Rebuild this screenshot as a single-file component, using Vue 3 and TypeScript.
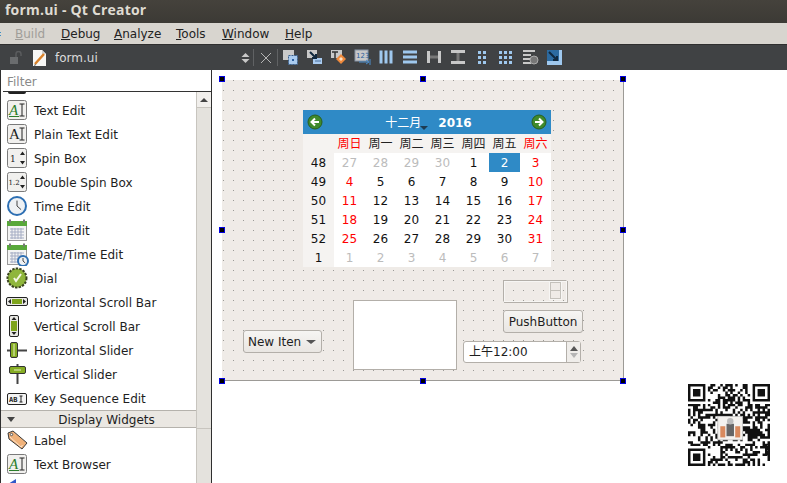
<script setup lang="ts">
import { computed } from 'vue'

const menus = [
  { label: 'Build', key: 'B', rest: 'uild', disabled: true, width: 46 },
  { label: 'Debug', key: 'D', rest: 'ebug', disabled: false, width: 53 },
  { label: 'Analyze', key: 'A', rest: 'nalyze', disabled: false, width: 62 },
  { label: 'Tools', key: 'T', rest: 'ools', disabled: false, width: 46 },
  { label: 'Window', key: 'W', rest: 'indow', disabled: false, width: 63 },
  { label: 'Help', key: 'H', rest: 'elp', disabled: false, width: 40 }
]

const frame =
  '<rect x="2.5" y="2.5" width="19" height="19" rx="2" fill="#f1f0ee" stroke="#7a7a7a"/>'
const ai = (color: string) =>
  frame +
  `<text x="4" y="17" font-family="Liberation Serif" font-size="15" fill="${color}"${color === '#222' ? '' : ' font-style="italic"'}>A</text>` +
  (color === '#222' ? '' : '<path d="M4 18.5h10" stroke="#2a7d2a"/>') +
  '<path d="M14.5 6h5M17 6v12M14.5 18h5" stroke="#222" fill="none"/>'
const clock = (cx: number, cy: number, r: number) =>
  `<circle cx="${cx}" cy="${cy}" r="${r}" fill="#eef1f4" stroke="#2d6fb3" stroke-width="2"/>` +
  `<path d="M${cx} ${cy - r * 0.6}V${cy}L${cx + r * 0.45} ${cy + r * 0.4}" stroke="#444" fill="none"/>`
const calendar =
  '<rect x="2.5" y="3.5" width="19" height="19" fill="#f4f4f4" stroke="#999"/>' +
  '<rect x="2" y="3" width="20" height="5" fill="#58a83a"/>' +
  '<path d="M5 1.5v3M19 1.5v3" stroke="#777" stroke-width="2"/>' +
  '<path d="M5 11h14M5 14h14M5 17h14M5 20h14M7 10v11M10 10v11M13 10v11M16 10v11" stroke="#a5adc4"/>'

const items = [
  { name: 'Text Edit', icon: ai('#2a7d2a') },
  { name: 'Plain Text Edit', icon: ai('#222') },
  {
    name: 'Spin Box',
    icon:
      frame +
      '<text x="5" y="16" font-family="DejaVu Serif" font-size="9" fill="#222">1</text>' +
      '<path d="M15 9l2.5-3.5L20 9zM15 15l2.5 3.5L20 15z" fill="#222"/>'
  },
  {
    name: 'Double Spin Box',
    icon:
      frame +
      '<text x="3.5" y="15" font-family="DejaVu Serif" font-size="7" fill="#222">1.2</text>' +
      '<path d="M15 9l2.5-3.5L20 9zM15 15l2.5 3.5L20 15z" fill="#222"/>'
  },
  { name: 'Time Edit', icon: clock(12, 12, 9) },
  { name: 'Date Edit', icon: calendar },
  {
    name: 'Date/Time Edit',
    icon: calendar + clock(18, 19, 5)
  },
  {
    name: 'Dial',
    icon:
      '<circle cx="12" cy="12" r="9.5" fill="#8fb63c" stroke="#39421f" stroke-width="2" stroke-dasharray="2.4 1.2"/>' +
      '<circle cx="12" cy="12" r="7.5" fill="#8fb63c"/>' +
      '<path d="M9 12l2 3 5-7" stroke="#f4f7e6" stroke-width="2" fill="none"/>'
  },
  {
    name: 'Horizontal Scroll Bar',
    icon:
      '<rect x="1.5" y="7.5" width="21" height="8" rx="1.5" fill="#e8e8e4" stroke="#222"/>' +
      '<rect x="7" y="9" width="10" height="5" fill="#7ea41c"/>' +
      '<path d="M6 9l-3 2.5 3 2.5zM18 9l3 2.5-3 2.5z" fill="#222"/>'
  },
  {
    name: 'Vertical Scroll Bar',
    icon:
      '<rect x="4.5" y="1.5" width="9" height="21" rx="1.5" fill="#e8e8e4" stroke="#222"/>' +
      '<rect x="6" y="7" width="6" height="10" fill="#7ea41c"/>' +
      '<path d="M6.5 6L9 3l2.5 3zM6.5 18L9 21l2.5-3z" fill="#222"/>'
  },
  {
    name: 'Horizontal Slider',
    icon:
      '<path d="M2 12.5h20" stroke="#444" stroke-width="2"/>' +
      '<rect x="5.5" y="4.5" width="7" height="15" rx="1.5" fill="#86ad24" stroke="#333"/>' +
      '<path d="M9 6v12" stroke="#e6efc6"/>'
  },
  {
    name: 'Vertical Slider',
    icon:
      '<path d="M12.5 2v20" stroke="#444" stroke-width="2"/>' +
      '<rect x="4.5" y="4.5" width="16" height="7" rx="1.5" fill="#86ad24" stroke="#333"/>' +
      '<path d="M9 8h7" stroke="#e6efc6"/>'
  },
  {
    name: 'Key Sequence Edit',
    icon:
      '<rect x="2.5" y="7.5" width="19" height="11" rx="1.5" fill="#f4f4f4" stroke="#222"/>' +
      '<text x="4" y="15.5" font-family="DejaVu Sans Mono" font-weight="bold" font-size="7" fill="#222">AB</text>' +
      '<path d="M14.5 10h3M16 10v6M14.5 16h3" stroke="#222" fill="none"/>'
  }
]

const displayItems = [
  {
    name: 'Label',
    icon:
      '<path d="M3 5l5-2 14 12-5 6L4 11z" fill="#f0b27a" stroke="#3a3a3a"/>' +
      '<path d="M5 9l11 10 1.5-2" stroke="#fbe3cc" fill="none"/>' +
      '<circle cx="6.5" cy="6.5" r="1.2" fill="#fff" stroke="#555"/>'
  },
  { name: 'Text Browser', icon: ai('#2a7d2a') },
  {
    name: '',
    icon: '<path d="M3 8l8-5v6H3z" fill="#3158c9"/>'
  }
]

const toolIcons = [
  '<rect x="1" y="1" width="11" height="10" fill="#c9c9c9"/><rect x="6.5" y="6.5" width="9" height="9" fill="#a9cbf0" stroke="#3a5f8c" stroke-dasharray="2 1"/><rect x="10" y="10" width="2" height="2" fill="#2c5f9e"/>',
  '<rect x="1" y="1" width="10" height="8" fill="#c9c9c9"/><rect x="7" y="9" width="9" height="6" fill="#a9cbf0"/><path d="M4 3l6 6M10 5v4H6" stroke="#10283f" stroke-width="2" fill="none"/><path d="M9 12h6" stroke="#4a6f9a"/>',
  '<rect x="1" y="1" width="11" height="8" fill="#c9c9c9"/><path d="M2 3h6M5 3v6" stroke="#333" stroke-width="1.5"/><path d="M6 10l5-5 5 5-5 5z" fill="#f08a3c"/><path d="M9 10l2-2 2 2-2 2z" fill="#fde2c6"/>',
  '<rect x="1" y="1" width="13" height="11" fill="#c9c9c9" stroke="#8795a8"/><text x="2" y="9" font-family="DejaVu Sans" font-size="7" fill="#2c5f9e">123</text><path d="M5 13h9M12 11l3 2-3 2M16 10v6" stroke="#4d8ecb" fill="none"/>',
  '<path d="M3 1.5v13M8 1.5v13M13 1.5v13" stroke="#9fc8ee" stroke-width="3"/>',
  '<path d="M1 3h14M1 8h14M1 13h14" stroke="#9fc8ee" stroke-width="3"/>',
  '<path d="M2.5 2v12M13.5 2v12" stroke="#c8c8c8" stroke-width="3"/><path d="M4 8h8" stroke="#777" stroke-width="3"/>',
  '<path d="M1 2.5h14M1 13.5h14" stroke="#c8c8c8" stroke-width="3"/><path d="M8 4v8" stroke="#777" stroke-width="3"/>',
  '<path d="M4 2h3v3H4zM9 2h3v3H9zM4 7h3v3H4zM9 7h3v3H9zM4 12h3v3H4zM9 12h3v3H9z" fill="#9fc8ee"/>',
  '<path d="M1 2h3v3H1zM6 2h3v3H6zM11 2h3v3h-3zM1 7h3v3H1zM6 7h3v3H6zM11 7h3v3h-3zM1 12h3v3H1zM6 12h3v3H6zM11 12h3v3h-3z" fill="#9fc8ee"/>',
  '<path d="M1 2h12M1 6h8M1 10h8M1 14h8" stroke="#c8c8c8" stroke-width="2"/><circle cx="12" cy="11" r="4" fill="#777" stroke="#aaa"/>',
  '<rect x="1" y="1" width="15" height="15" fill="#9fc8ee"/><rect x="1" y="1" width="12" height="11" fill="#2c6aa0"/><path d="M3 3l8 8M11 7v4H7" stroke="#10283f" stroke-width="2" fill="none"/>'
]

const weekdays = [
  { text: '周日', red: true },
  { text: '周一', red: false },
  { text: '周二', red: false },
  { text: '周三', red: false },
  { text: '周四', red: false },
  { text: '周五', red: false },
  { text: '周六', red: true }
]

const weeks = [
  { no: 48, days: [27, 28, 29, 30, 1, 2, 3] },
  { no: 49, days: [4, 5, 6, 7, 8, 9, 10] },
  { no: 50, days: [11, 12, 13, 14, 15, 16, 17] },
  { no: 51, days: [18, 19, 20, 21, 22, 23, 24] },
  { no: 52, days: [25, 26, 27, 28, 29, 30, 31] },
  { no: 1, days: [1, 2, 3, 4, 5, 6, 7] }
]

const dayClass = (row: number, col: number, day: number) => ({
  muted: (row === 0 && day > 20) || row === 5,
  red: (col === 0 || col === 6) && !(row === 5),
  selected: row === 0 && day === 2
})

// QR pattern is only decorative, seeded so that it stays the same between runs
const qrPath = computed(() => {
  const size = 33
  let seed = 20161202
  const next = () => {
    seed = (seed * 1103515245 + 12345) & 0x7fffffff
    return (seed >> 16) & 1
  }
  const inFinder = (x: number, y: number, ox: number, oy: number) =>
    x >= ox && x < ox + 8 && y >= oy && y < oy + 8
  let d = ''
  for (let y = 0; y < size; y++) {
    for (let x = 0; x < size; x++) {
      if (
        inFinder(x, y, 0, 0) ||
        inFinder(x, y, 25, 0) ||
        inFinder(x, y, 0, 25)
      )
        continue
      if (next()) d += `M${x} ${y}h1v1h-1z`
    }
  }
  for (const [ox, oy] of [
    [0, 0],
    [26, 0],
    [0, 26]
  ]) {
    d += `M${ox} ${oy}h7v7h-7zM${ox + 1} ${oy + 1}v5h5v-5zM${ox + 2} ${oy + 2}h3v3h-3z`
  }
  return d
})

const handles = [
  { x: 0, y: 0 },
  { x: 201, y: 0 },
  { x: 401, y: 0 },
  { x: 0, y: 151 },
  { x: 401, y: 151 },
  { x: 0, y: 302 },
  { x: 201, y: 302 },
  { x: 401, y: 302 }
]
</script>

<template>
  <div class="app">
    <header class="titlebar">form.ui - Qt Creator</header>

    <nav class="menubar">
      <span
        v-for="menu in menus"
        :key="menu.label"
        class="menu"
        :class="{ disabled: menu.disabled }"
        :style="{ width: menu.width + 'px' }"
        ><u>{{ menu.key }}</u>{{ menu.rest }}</span
      >
    </nav>

    <div class="toolbar">
      <svg class="lock" width="14" height="14" viewBox="0 0 14 14">
        <rect x="1" y="6" width="8" height="7" fill="#6a6c6e" />
        <path d="M7 6V3a2.5 2.5 0 0 1 5 0v2" stroke="#5a5c5e" stroke-width="1.5" fill="none" />
      </svg>
      <svg class="doc" width="16" height="18" viewBox="0 0 16 18">
        <path d="M1 1h9l4 4v12H1z" fill="#f7f7f5" />
        <path d="M10 1v4h4" fill="#cfcfcf" />
        <path d="M3 15L12 5" stroke="#d9822b" stroke-width="2.5" />
        <path d="M3 15l-1 2 2-1z" fill="#333" />
      </svg>
      <span class="file">form.ui</span>
      <svg class="updown" width="9" height="12" viewBox="0 0 9 12">
        <path d="M0.5 5L4.5 1l4 4zM0.5 7l4 4 4-4z" fill="#c8c8c8" />
      </svg>
      <i class="sep"></i>
      <svg class="close" width="12" height="12" viewBox="0 0 12 12">
        <path d="M1 1l10 10M11 1L1 11" stroke="#b5b5b5" stroke-width="1" />
      </svg>
      <i class="sep"></i>
      <div class="tools">
        <svg
          v-for="(icon, i) in toolIcons"
          :key="i"
          width="17"
          height="17"
          viewBox="0 0 17 17"
          v-html="icon"
        ></svg>
      </div>
    </div>

    <div class="workspace">
      <aside class="sidebar">
        <div class="filter">Filter</div>
        <div class="box">
          <div class="list">
            <div class="sliver"></div>
            <div v-for="item in items" :key="item.name" class="row">
              <svg width="24" height="24" viewBox="0 0 24 24" v-html="item.icon"></svg>
              <span>{{ item.name }}</span>
            </div>
            <div class="category">
              <i class="tri"></i>
              <span>Display Widgets</span>
            </div>
            <div v-for="item in displayItems" :key="item.name" class="row">
              <svg width="24" height="24" viewBox="0 0 24 24" v-html="item.icon"></svg>
              <span>{{ item.name }}</span>
            </div>
          </div>
          <div class="scrollbar">
            <div class="scroll-up"><i></i></div>
            <div class="scroll-line"></div>
          </div>
        </div>
      </aside>

      <main class="canvas">
        <div class="form">
          <div class="calendar">
            <div class="cal-nav">
              <svg width="16" height="16" viewBox="0 0 16 16">
                <circle cx="8" cy="8" r="7" fill="#3f8a2c" stroke="#2a5f1e" />
                <path d="M12 8H5M8 4.5L4.5 8 8 11.5" stroke="#fff" stroke-width="2" fill="none" />
              </svg>
              <div class="cal-title">
                <span class="month">十二月<i class="month-arrow"></i></span>
                <span class="year">2016</span>
              </div>
              <svg width="16" height="16" viewBox="0 0 16 16">
                <circle cx="8" cy="8" r="7" fill="#3f8a2c" stroke="#2a5f1e" />
                <path d="M4 8h7M8 4.5L11.5 8 8 11.5" stroke="#fff" stroke-width="2" fill="none" />
              </svg>
            </div>
            <div class="cal-grid">
              <span class="cal-head"></span>
              <span
                v-for="day in weekdays"
                :key="day.text"
                class="cal-head"
                :class="{ red: day.red }"
                >{{ day.text }}</span
              >
              <template v-for="(week, row) in weeks" :key="week.no">
                <span class="cal-week">{{ week.no }}</span>
                <span
                  v-for="(day, col) in week.days"
                  :key="col"
                  class="cal-day"
                  :class="dayClass(row, col, day)"
                  >{{ day }}</span
                >
              </template>
            </div>
          </div>

          <div class="combo">
            <span>New Iten</span>
            <i class="combo-arrow"></i>
          </div>
          <div class="blank"></div>
          <div class="scroller"><i></i></div>
          <button class="push">PushButton</button>
          <div class="time">
            <span class="time-text">上午12:00</span>
            <div class="spin">
              <i class="spin-up"></i>
              <i class="spin-down"></i>
            </div>
          </div>

          <i
            v-for="(h, i) in handles"
            :key="i"
            class="handle"
            :style="{ left: h.x + 'px', top: h.y + 'px' }"
          ></i>
        </div>

        <div class="qr">
          <svg width="82" height="82" viewBox="0 0 33 33">
            <path :d="qrPath" fill="#111" fill-rule="evenodd" />
            <rect x="12" y="13" width="10" height="9.5" fill="#f4f2ef" stroke="#bbb" stroke-width="0.3" />
            <rect x="13" y="17" width="2" height="4.5" fill="#d98a5e" />
            <rect x="19" y="17" width="2" height="4.5" fill="#d98a5e" />
            <rect x="15.5" y="16" width="3" height="5" fill="#666" />
            <circle cx="17" cy="15" r="1.3" fill="#bbb" />
          </svg>
        </div>
      </main>
    </div>
  </div>
</template>

<style>
html,
body {
  margin: 0;
  background: #fff;
}
</style>

<style scoped>
.app {
  width: 787px;
  height: 483px;
  overflow: hidden;
  display: flex;
  flex-direction: column;
  font-family: 'DejaVu Sans', 'Noto Sans CJK SC', sans-serif;
  font-size: 12px;
  color: #1e1e1e;
  background: #fff;
}

.titlebar {
  height: 23px;
  padding-left: 5px;
  line-height: 20px;
  font-family: 'Open Sans', sans-serif;
  font-weight: 700;
  font-size: 14px;
  letter-spacing: 0.2px;
  color: #dfdbd2;
  background: linear-gradient(#45423c, #3c3a35);
}

.menubar {
  height: 21px;
  position: relative;
  display: flex;
  padding-left: 15px;
  line-height: 23px;
  background: #d8d5cf;
  border-bottom: 1px solid #2f2f2f;
  color: #222;
}

.menubar::before {
  content: '';
  position: absolute;
  left: 0;
  top: 9px;
  width: 1px;
  height: 1px;
  background: #3f8fc4;
  box-shadow: 0 3px 0 #3f8fc4;
}

.menu.disabled {
  color: #a09e99;
}

.toolbar {
  height: 25px;
  display: flex;
  align-items: center;
  background: #404244;
  color: #dcdcdc;
}

.lock {
  margin-left: 9px;
}

.doc {
  margin-left: 9px;
}

.file {
  margin-left: 7px;
  width: 186px;
}

.updown {
  flex: none;
  margin-right: 3px;
}

.sep {
  width: 1px;
  height: 17px;
  background: #606264;
}

.close {
  margin: 0 5px 0 6px;
}

.tools {
  display: flex;
  gap: 7px;
  margin-left: 4px;
}

.workspace {
  flex: 1;
  display: flex;
  min-height: 0;
}

.sidebar {
  width: 210px;
  flex: none;
  display: flex;
  flex-direction: column;
  border-left: 1px solid #2f2f2f;
  border-right: 1px solid #2f2f2f;
  background: #fff;
}

.filter {
  height: 21px;
  flex: none;
  margin-left: 2px;
  padding-left: 4px;
  line-height: 24px;
  color: #8a8a8a;
  background: #fff;
  border-bottom: 1px solid #333;
}

.box {
  flex: 1;
  display: flex;
  min-height: 0;
}

.list {
  flex: 1;
  overflow: hidden;
}

.sliver {
  height: 6px;
  position: relative;
}

.sliver::before {
  content: '';
  position: absolute;
  left: 7px;
  top: 0;
  width: 18px;
  height: 2px;
  background: #222;
  border-radius: 0 0 4px 4px;
}

.row {
  height: 24px;
  display: flex;
  align-items: center;
  gap: 5px;
  padding-left: 4px;
  white-space: nowrap;
}

.row span {
  padding-top: 2px;
}

.row svg {
  flex: none;
}

.category {
  height: 18px;
  position: relative;
  display: flex;
  align-items: center;
  justify-content: center;
  padding: 2px 0 0 16px;
  background: #eae7e2;
  border-top: 1px solid #b5b2ac;
  border-bottom: 1px solid #b5b2ac;
  box-sizing: border-box;
}

.tri {
  position: absolute;
  left: 6px;
  top: 6px;
  border-style: solid;
  border-width: 5px 4px 0;
  border-color: #444 transparent transparent;
}

.scrollbar {
  width: 14px;
  flex: none;
  background: #e4e2dd;
  border-left: 1px solid #c8c5bf;
}

.scroll-up {
  height: 15px;
  display: flex;
  align-items: center;
  justify-content: center;
  background: #f1efec;
  border-bottom: 1px solid #c8c5bf;
}

.scroll-up i {
  border-style: solid;
  border-width: 0 4px 4px;
  border-color: transparent transparent #444;
}

.scroll-line {
  height: 1px;
  margin-top: 320px;
  background: #c8c5bf;
}

.canvas {
  flex: 1;
  position: relative;
  background: #fff;
  padding: 10px 0 0 10px;
  min-width: 0;
}

.form {
  position: relative;
  width: 402px;
  height: 301px;
  box-sizing: border-box;
  background-color: #efebe7;
  background-image: conic-gradient(from 270deg at 1px 1px, #9a9a96 25%, transparent 0);
  background-size: 10px 10px;
  background-position: 1px 0;
  border-right: 1px solid #9c9a96;
  border-bottom: 1px solid #9c9a96;
}

.calendar {
  position: absolute;
  left: 81px;
  top: 30px;
  width: 248px;
  background: #fff;
}

.cal-nav {
  height: 24px;
  display: flex;
  align-items: center;
  justify-content: space-between;
  padding: 0 4px;
  background: #2f8ac6;
  color: #fff;
}

.cal-title {
  display: flex;
  align-items: center;
  gap: 17px;
  margin-left: 3px;
  font-weight: 700;
}

.month {
  position: relative;
  font-weight: 400;
  margin-top: -1px;
}

.year {
  margin-top: 1px;
}

.month-arrow {
  position: absolute;
  right: -7px;
  bottom: 0;
  border-style: solid;
  border-width: 4px 4px 0;
  border-color: #1d3b52 transparent transparent;
}

.cal-grid {
  display: grid;
  grid-template-columns: repeat(8, 31px);
  grid-auto-rows: 19px;
  text-align: center;
  line-height: 21px;
}

.cal-head {
  background: #f5f3f1;
  color: #222;
}

.cal-week {
  background: #f5f3f1;
  color: #111;
}

.cal-day {
  color: #111;
}

.red {
  color: #f00;
}

.cal-day.muted {
  color: #bcbcbc;
}

.cal-day.selected {
  background: #2f8ac6;
  color: #fff;
}

.combo {
  position: absolute;
  left: 21px;
  top: 250px;
  width: 79px;
  height: 23px;
  box-sizing: border-box;
  display: flex;
  align-items: center;
  justify-content: space-between;
  padding: 0 5px 0 4px;
  border: 1px solid #b3afa9;
  border-radius: 3px;
  background: linear-gradient(#f6f5f3, #e9e6e2);
}

.combo-arrow {
  border-style: solid;
  border-width: 4px 5px 0;
  border-color: #555 transparent transparent;
}

.blank {
  position: absolute;
  left: 131px;
  top: 220px;
  width: 104px;
  height: 70px;
  box-sizing: border-box;
  background: #fff;
  border: 1px solid #b3afa9;
}

.scroller {
  position: absolute;
  left: 281px;
  top: 200px;
  width: 64px;
  height: 22px;
  box-sizing: border-box;
  border: 1px solid #b3afa9;
  border-right-color: #f7f6f4;
  border-bottom-color: #f7f6f4;
  box-shadow: inset 1px 1px 0 #f7f6f4, 1px 1px 0 #b3afa9;
}

.scroller i {
  position: absolute;
  left: 46px;
  top: 1px;
  width: 11px;
  height: 17px;
  box-sizing: border-box;
  border: 1px solid #c4c1bb;
  background: linear-gradient(#c4c1bb, #c4c1bb) center / 9px 1px no-repeat, #efebe7;
  outline: 1px solid #f7f6f4;
}

.push {
  position: absolute;
  left: 281px;
  top: 230px;
  width: 80px;
  height: 23px;
  padding: 0;
  font: inherit;
  color: #1e1e1e;
  border: 1px solid #b3afa9;
  border-radius: 3px;
  background: linear-gradient(#f6f5f3, #e9e6e2);
}

.time {
  position: absolute;
  left: 241px;
  top: 261px;
  width: 118px;
  height: 22px;
  box-sizing: border-box;
  display: flex;
  justify-content: space-between;
  border: 1px solid #b3afa9;
  border-radius: 3px;
  background: #fff;
}

.time-text {
  padding-left: 5px;
  line-height: 20px;
}

.spin {
  width: 13px;
  display: flex;
  flex-direction: column;
  align-items: center;
  justify-content: center;
  gap: 2px;
  border-left: 1px solid #b3afa9;
  background: #efedea;
}

.spin-up {
  border-style: solid;
  border-width: 0 4px 5px;
  border-color: transparent transparent #555;
}

.spin-down {
  border-style: solid;
  border-width: 5px 4px 0;
  border-color: #b5b5b5 transparent transparent;
}

.handle {
  position: absolute;
  width: 6px;
  height: 6px;
  margin: -4px 0 0 -3px;
  box-sizing: border-box;
  background: #000;
  border: 1px solid #0000e0;
}

.qr {
  position: absolute;
  left: 476px;
  top: 314px;
  filter: blur(0.4px);
}

.qr svg {
  display: block;
}
</style>
